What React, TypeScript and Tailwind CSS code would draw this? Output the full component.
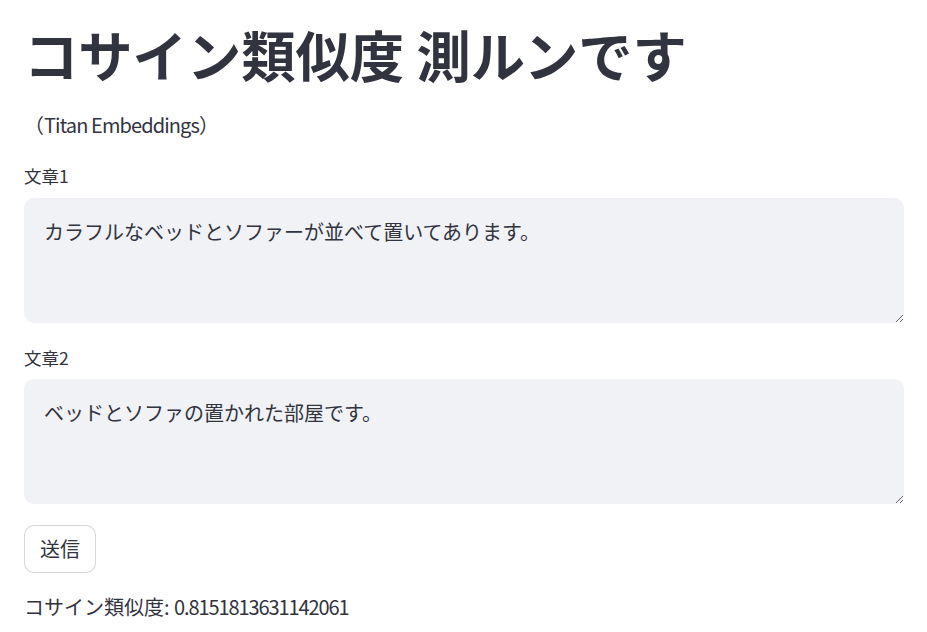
import React from "react";

export default function App() {
  const font = { fontFamily: '"Noto Sans CJK JP", "Noto Sans", sans-serif' };
  return (
    <div className="min-h-[632px] w-full bg-white text-[#31333f]" style={font}>
      <div className="ml-[24px] flex w-[880px] flex-col">
        <h1 className="mt-[21px] text-[54.3px] font-bold leading-[66px]">
          コサイン類似度 測ルンです
        </h1>
        <p className="mt-[22px] text-[20px] leading-[32px]">
          （<span className="tracking-[-0.9px]">Titan Embeddings</span>）
        </p>
        <label className="mt-[21px] text-[17.5px] leading-[28px]">文章1</label>
        <textarea
          className="mt-[7.6px] h-[125px] w-full resize-y rounded-[10px] border-0 bg-[#f0f2f6] pl-[20px] pr-[20px] pt-[18px] text-[20px] leading-[32px] text-[#31333f] outline-none"
          defaultValue="カラフルなベッドとソファーが並べて置いてあります。"
          style={font}
        />
        <label className="mt-[21.4px] text-[17.5px] leading-[28px]">文章2</label>
        <textarea
          className="mt-[7px] h-[125px] w-full resize-y rounded-[10px] border-0 bg-[#f0f2f6] pl-[20px] pr-[20px] pt-[18px] text-[20px] leading-[32px] text-[#31333f] outline-none"
          defaultValue="ベッドとソファの置かれた部屋です。"
          style={font}
        />
        <div className="mt-[20.7px]">
          <button className="flex h-[48px] w-[72px] items-center justify-center rounded-[10px] border border-[rgba(49,51,63,0.2)] bg-white text-[20px] text-[#31333f]">
            送信
          </button>
        </div>
        <p className="mt-[18.7px] text-[20px] leading-[32px]">
          コサイン類似度: <span className="tracking-[-1.1px]">0.8151813631142061</span>
        </p>
      </div>
    </div>
  );
}
